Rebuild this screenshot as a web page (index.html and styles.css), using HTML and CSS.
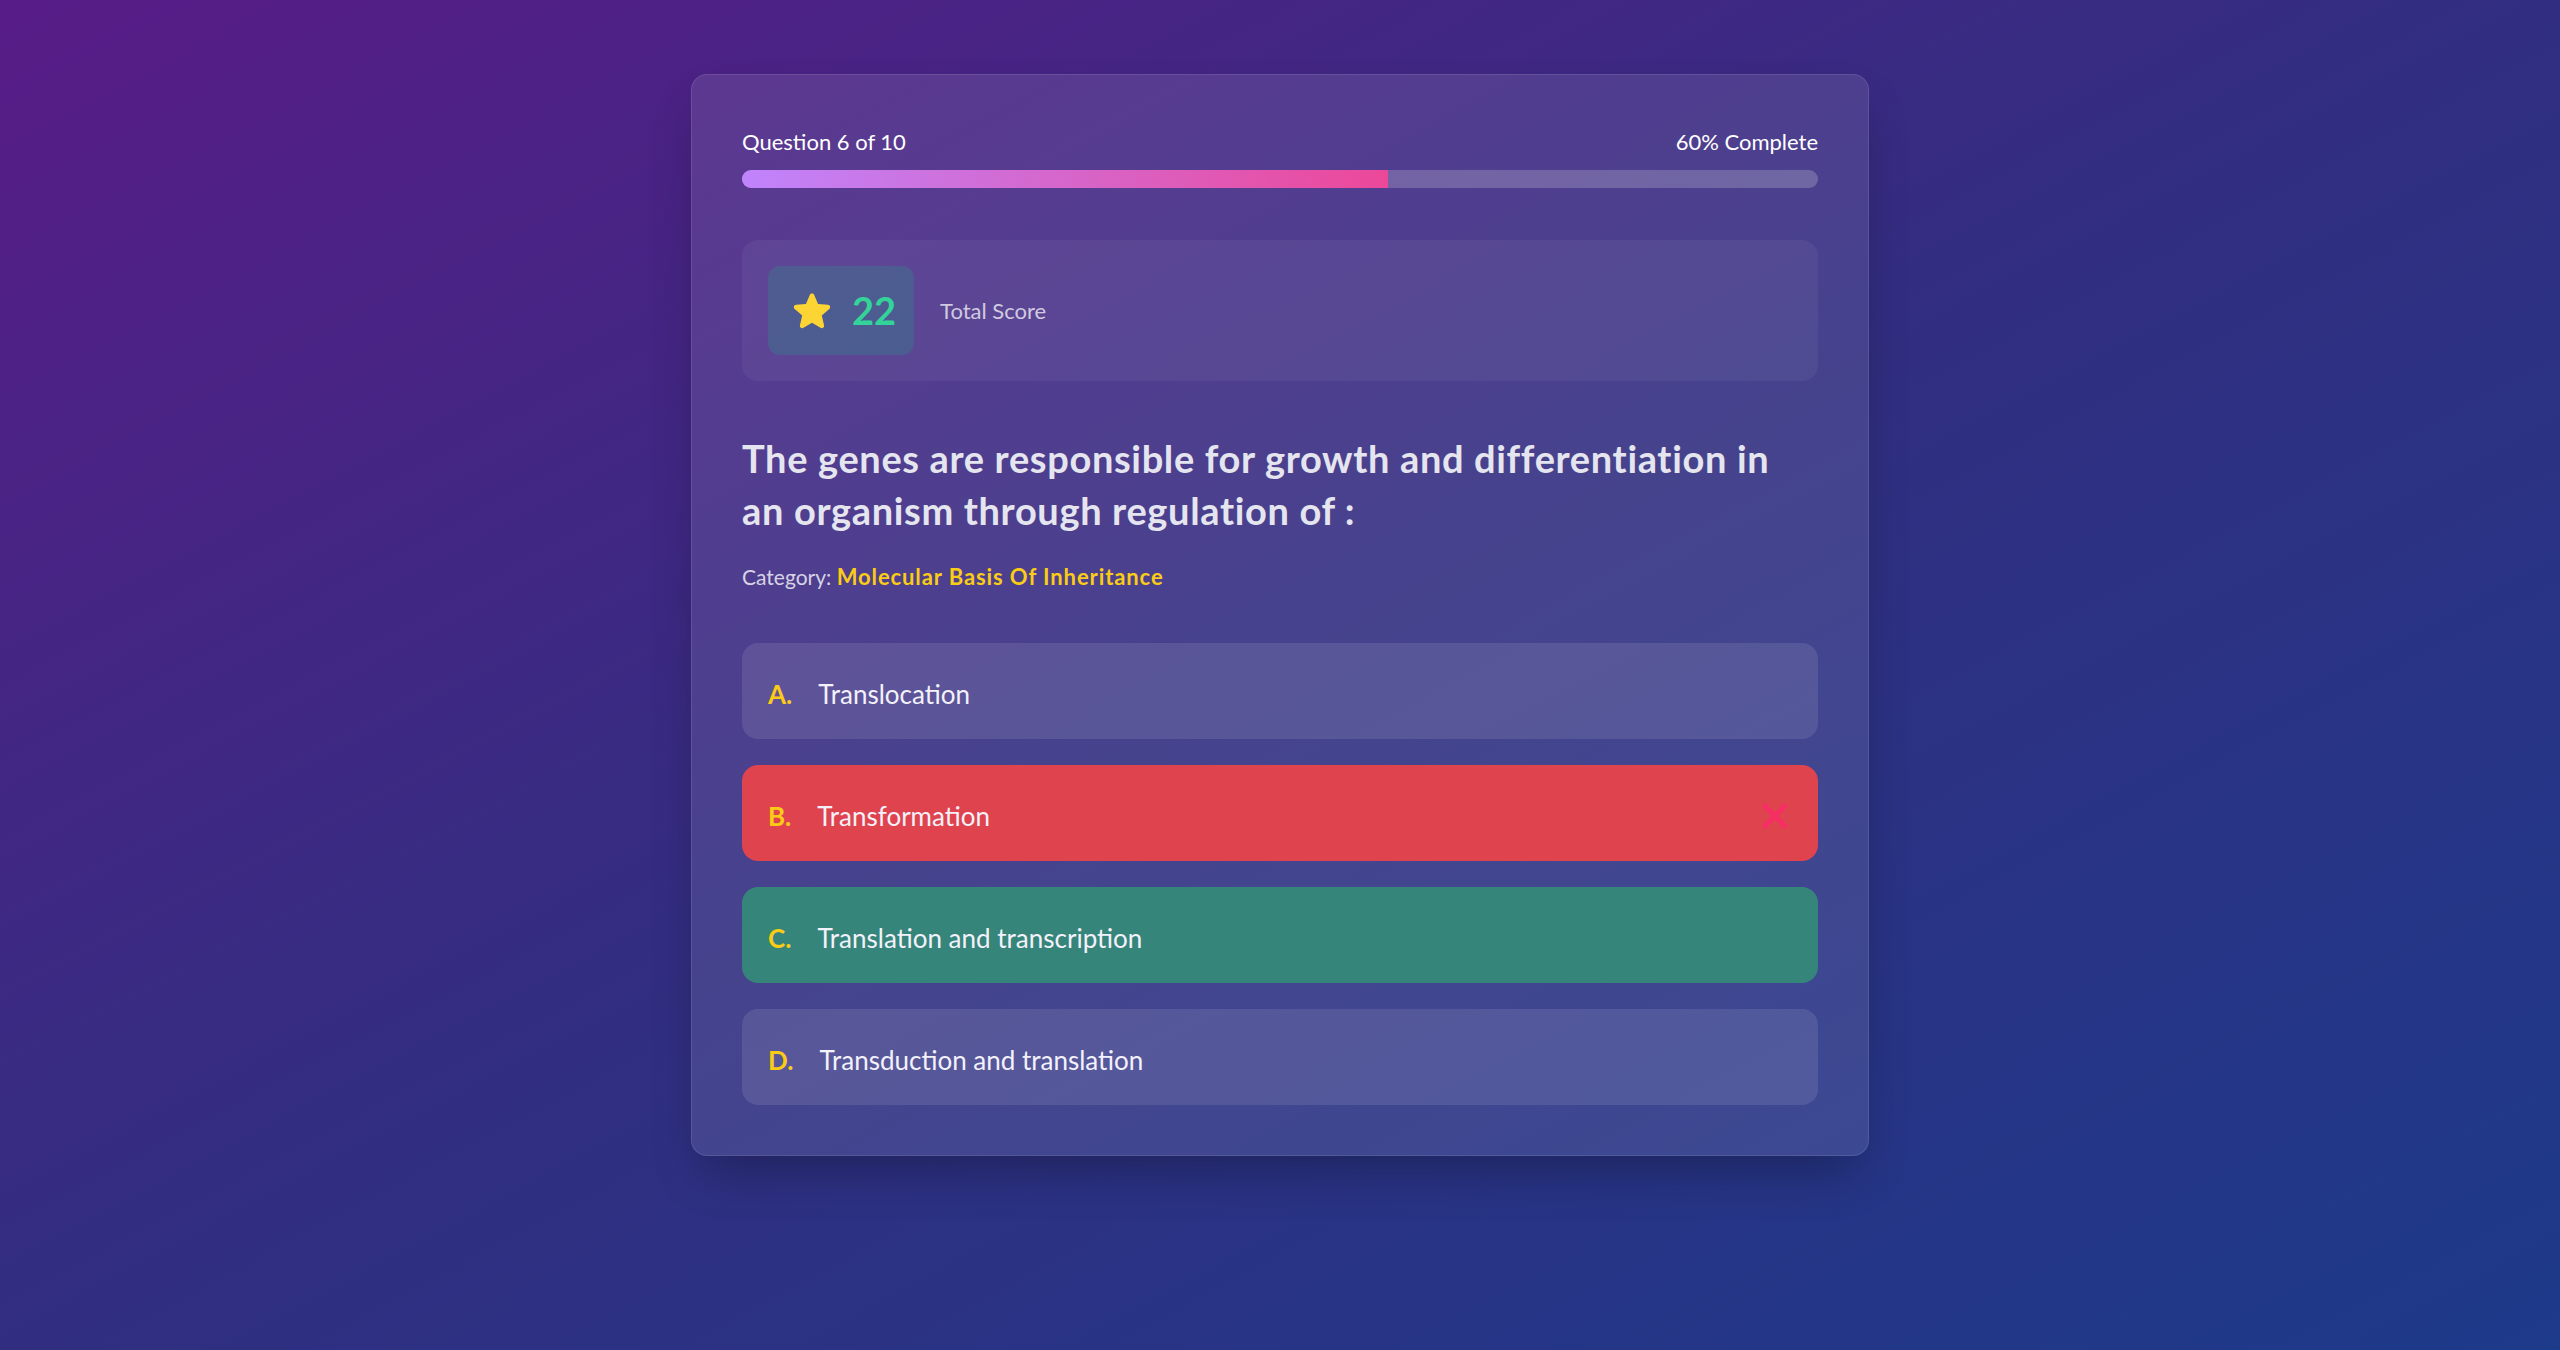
FILE: index.html
```html
<!DOCTYPE html>
<html lang="en">
<head>
<meta charset="utf-8">
<title>Quiz</title>
<link rel="stylesheet" href="styles.css">
</head>
<body>
<main class="page">
  <section class="card">
    <div class="progress-head">
      <span>Question 6 of 10</span>
      <span>60% Complete</span>
    </div>
    <div class="track"><div class="fill" style="width:60%"></div></div>

    <div class="score-panel">
      <div class="score-badge">
        <svg class="star" viewBox="0 0 24 24" width="44" height="44" aria-hidden="true">
          <path fill="#fcd535" fill-rule="evenodd" d="M10.788 3.21c.448-1.077 1.976-1.077 2.424 0l2.082 5.006 5.404.434c1.164.093 1.636 1.545.749 2.305l-4.117 3.527 1.257 5.273c.271 1.136-.964 2.033-1.960 1.425L12 18.354 7.373 21.18c-.996.608-2.231-.29-1.96-1.425l1.257-5.273-4.117-3.527c-.887-.76-.415-2.212.749-2.305l5.404-.434 2.082-5.005Z"/>
        </svg>
        <span class="score">22</span>
      </div>
      <span class="score-label">Total Score</span>
    </div>

    <h1 class="question">The genes are responsible for growth and differentiation in an organism through regulation of :</h1>
    <p class="category">Category: <strong>Molecular Basis Of Inheritance</strong></p>

    <ul class="options">
      <li class="option"><span class="letter">A.</span><span class="text">Translocation</span></li>
      <li class="option wrong"><span class="letter">B.</span><span class="text">Transformation</span>
        <svg class="mark" viewBox="0 0 26 26" width="26" height="26" aria-hidden="true">
          <path d="M3 3 23 23M23 3 3 23" stroke="#f72d66" stroke-width="4.6" stroke-linecap="round" fill="none"/>
        </svg>
      </li>
      <li class="option right"><span class="letter">C.</span><span class="text">Translation and transcription</span></li>
      <li class="option"><span class="letter">D.</span><span class="text">Transduction and translation</span></li>
    </ul>
  </section>
</main>
</body>
</html>
```

FILE: styles.css
```css
html, body {
  margin: 0;
  padding: 0;
}

body {
  min-height: 1350px;
  background: linear-gradient(to bottom right, #581c87 0%, #312e81 50%, #1e3a8a 100%);
  font-family: Lato, "Noto Sans", sans-serif;
  color: #ffffff;
}

.page {
  display: flex;
  justify-content: center;
  padding-top: 74px;
}

.card {
  width: 1178px;
  box-sizing: border-box;
  padding: 50px;
  border: 1px solid rgba(255, 255, 255, 0.1);
  border-radius: 16px;
  background: rgba(255, 255, 255, 0.1);
  box-shadow: 0 25px 50px -12px rgba(0, 0, 0, 0.3);
}

.progress-head {
  display: flex;
  justify-content: space-between;
  font-size: 22px;
  line-height: 33px;
  color: #ffffff;
}

.track {
  margin-top: 12px;
  height: 18px;
  border-radius: 9px;
  background: rgba(255, 255, 255, 0.2);
  overflow: hidden;
}

.fill {
  height: 100%;
  background: linear-gradient(to right, #c084fc, #ec4899);
}

.score-panel {
  margin-top: 52px;
  display: flex;
  align-items: center;
  padding: 26px;
  border-radius: 16px;
  background: rgba(255, 255, 255, 0.05);
}

.score-badge {
  display: flex;
  align-items: center;
  gap: 18px;
  padding: 22px 18px 22px 22px;
  border-radius: 12px;
  background: rgba(16, 185, 129, 0.2);
}

.star {
  display: block;
}

.score {
  font-size: 38px;
  line-height: 45px;
  font-weight: 700;
  color: #34d399;
}

.score-label {
  margin-left: 26px;
  font-size: 22px;
  color: rgba(255, 255, 255, 0.72);
}

.question {
  margin: 51px 0 0;
  max-width: 1050px;
  font-size: 38px;
  line-height: 52px;
  font-weight: 700;
  letter-spacing: 0.65px;
  color: #e5e5ef;
}

.category {
  margin: 25px 0 0;
  font-size: 21px;
  line-height: 32px;
  color: rgba(255, 255, 255, 0.78);
}

.category strong {
  color: #facc15;
  font-weight: 700;
  font-size: 22px;
  letter-spacing: 0.9px;
}

.options {
  list-style: none;
  margin: 50px 0 0;
  padding: 0;
  display: flex;
  flex-direction: column;
  gap: 26px;
}

.option {
  display: flex;
  align-items: center;
  height: 96px;
  box-sizing: border-box;
  padding: 5px 30px 0 26px;
  border-radius: 16px;
  background: rgba(255, 255, 255, 0.1);
}

.option.wrong {
  background: #df444e;
}

.option.right {
  background: #36857a;
}

.letter {
  font-size: 26px;
  font-weight: 700;
  color: #facc15;
  margin-right: 26px;
}

.text {
  font-size: 26px;
  color: #f3f1fa;
}

.mark {
  margin-left: auto;
  display: block;
}
```
